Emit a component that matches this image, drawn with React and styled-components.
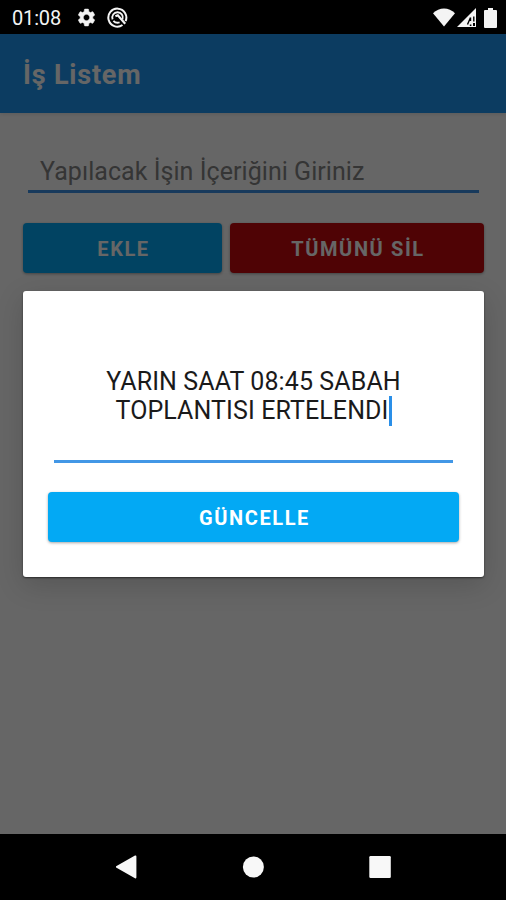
import React from "react";
import styled, { createGlobalStyle } from "styled-components";

const GlobalStyle = createGlobalStyle`
  *, *::before, *::after { box-sizing: border-box; }
  body { margin: 0; background: #000; font-family: Roboto, sans-serif; }
`;

const Phone = styled.div`
  display: flex;
  flex-direction: column;
  width: 506px;
  height: 900px;
  overflow: hidden;
  background: #000;
`;

const StatusBar = styled.header`
  display: flex;
  align-items: center;
  flex: 0 0 34px;
  padding: 1px 9px 0 12px;
  color: #f4f4f4;
  svg { display: block; }
`;

const Clock = styled.time`
  width: 64px;
  font-size: 20px;
  line-height: 24px;
  letter-spacing: -0.15px;
`;

const StatusGroup = styled.div`
  display: flex;
  align-items: center;
  gap: ${(p) => p.$gap}px;
  margin-left: ${(p) => (p.$end ? "auto" : "0")};
`;

const Screen = styled.main`
  position: relative;
  display: flex;
  flex-direction: column;
  flex: 1;
  background: #fff;
`;

const AppBar = styled.div`
  display: flex;
  align-items: center;
  flex: 0 0 79px;
  padding: 2px 23px 0;
  background: #1e97f3;
  box-shadow: 0 1px 4px rgba(0, 0, 0, 0.12);
`;

const Title = styled.h1`
  margin: 0;
  color: #fff;
  font-size: 27px;
  line-height: 32px;
  font-weight: 700;
  letter-spacing: 0.8px;
`;

const Content = styled.section`
  display: flex;
  flex-direction: column;
  padding: 40px 22px 0 23px;
`;

const TaskInput = styled.div`
  height: 40px;
  margin: 0 5px;
  padding: 3px 12px 0;
  border-bottom: 3px solid #3e92e6;
  color: #858585;
  font-size: 25px;
  line-height: 32px;
  letter-spacing: 0.05px;
  white-space: nowrap;
`;

const ButtonRow = styled.div`
  display: grid;
  grid-template-columns: 199px 254px;
  gap: 8px;
  margin-top: 30px;
`;

const Button = styled.button`
  height: 50px;
  padding: 2px 0 0 2px;
  border: 0;
  border-radius: 4px;
  background: ${(p) => (p.$danger ? "#c6080d" : "#03a9f4")};
  box-shadow: 0 1px 3px rgba(0, 0, 0, 0.35);
  color: #fff;
  font: 700 20px/24px Roboto, sans-serif;
  letter-spacing: 1.6px;
  text-align: center;
`;

const Scrim = styled.div`
  position: absolute;
  inset: 0;
  padding: 256.5px 22px 0 23px;
  background: rgba(0, 0, 0, 0.6);
`;

const Dialog = styled.div`
  display: flex;
  flex-direction: column;
  height: 286.5px;
  padding: 76px 25px 0;
  border-radius: 3px;
  background: #fff;
  box-shadow: 0 1px 2px rgba(0, 0, 0, 0.55), 0 8px 28px rgba(0, 0, 0, 0.16);
`;

const EditField = styled.div`
  height: 96.5px;
  margin: 0 6px 29px;
  border-bottom: 3px solid #4297e6;
  color: #1a1a1a;
  font-size: 25px;
  line-height: 29.5px;
  letter-spacing: 0.1px;
  text-align: center;
`;

const Line = styled.div`
  display: flex;
  justify-content: center;
  white-space: nowrap;
`;

const Caret = styled.span`
  width: 3px;
  height: 30px;
  background: #2a8fe8;
`;

const NavBar = styled.nav`
  display: grid;
  grid-template-columns: repeat(3, 126.5px);
  justify-content: center;
  justify-items: center;
  align-items: center;
  flex: 0 0 66.5px;
  color: #f8f8f8;
`;

const Gear = () => (
  <svg width="21" height="21" viewBox="0 0 24 24" fill="currentColor" stroke="currentColor" strokeWidth=".6">
    <path d="M19.14 12.94c.04-.3.06-.61.06-.94 0-.32-.02-.64-.07-.94l2.03-1.58c.18-.14.23-.41.12-.61l-1.92-3.32c-.12-.22-.37-.29-.59-.22l-2.39.96c-.5-.38-1.03-.7-1.62-.94L14.4 2.81c-.04-.24-.24-.41-.48-.41h-3.84c-.24 0-.43.17-.47.41l-.36 2.54c-.59.24-1.13.57-1.62.94l-2.39-.96c-.22-.08-.47 0-.59.22L2.74 8.87c-.12.21-.08.47.12.61l2.03 1.58c-.05.3-.09.63-.09.94s.02.64.07.94l-2.03 1.58c-.18.14-.23.41-.12.61l1.92 3.32c.12.22.37.29.59.22l2.39-.96c.5.38 1.03.7 1.62.94l.36 2.54c.05.24.24.41.48.41h3.84c.24 0 .44-.17.47-.41l.36-2.54c.59-.24 1.13-.56 1.62-.94l2.39.96c.22.08.47 0 .59-.22l1.92-3.32c.12-.22.07-.47-.12-.61l-2.01-1.58zM12 15.6c-1.98 0-3.6-1.62-3.6-3.6s1.62-3.6 3.6-3.6 3.6 1.62 3.6 3.6-1.62 3.6-3.6 3.6z" />
  </svg>
);

const DebugBadge = () => (
  <svg width="21" height="21" viewBox="0 0 21 21" fill="none" stroke="currentColor">
    <path d="M15.5 18A9 9 0 1 1 18.6 14.2" strokeWidth="2" />
    <path d="M5.6 12.4A5.3 5.3 0 1 1 15.6 12.2" strokeWidth="1.8" />
    <path d="M8.4 9.2 10.8 8.2 18.2 16.8" strokeWidth="2.2" />
    <path d="M6.4 13.8Q8.8 16.6 12.6 15.4" strokeWidth="1.8" />
  </svg>
);

const Wifi = () => (
  <svg width="22" height="19" viewBox="0 0 22 19" fill="currentColor">
    <path d="M0 5.2C6-1.1 16-1.1 22 5.2L11 18.5Z" />
  </svg>
);

const Signal = () => (
  <svg width="19" height="19" viewBox="0 0 19 19">
    <path d="M0 19 19 0V19Z" fill="currentColor" />
    <path d="M10.5 16.5 13.5 9.5M13.5 9.5V13M16.8 8.5V13.5M12.8 17.2h1.6" fill="none" stroke="#000" strokeWidth="1.4" />
    <path d="M16 15h2v3h-2z" fill="#000" />
  </svg>
);

const Battery = () => (
  <svg width="13" height="20" viewBox="0 0 13 20" fill="currentColor">
    <path d="M4 0h5v2h3q1 0 1 1v16q0 1-1 1H1q-1 0-1-1V3q0-1 1-1h3Z" />
  </svg>
);

const Back = () => (
  <svg width="22" height="24" viewBox="0 0 22 24" fill="currentColor">
    <path d="M.7 11.2 19.6.5Q21 0 21 1.5V22.3Q21 24 19.6 23.2L.7 12.6Q-.2 12 .7 11.2Z" transform="translate(-.6 0)" />
  </svg>
);

const Home = () => (
  <svg width="22" height="22" viewBox="0 0 22 22" fill="currentColor">
    <circle cx="11.4" cy="11" r="10.5" />
  </svg>
);

const Recents = () => (
  <svg width="22" height="22" viewBox="0 0 22 22" fill="currentColor">
    <rect x=".3" y="0" width="21.5" height="22" rx="1.2" />
  </svg>
);

export default function App() {
  return (
    <>
      <GlobalStyle />
      <Phone>
        <StatusBar>
          <Clock>01:08</Clock>
          <StatusGroup $gap={10}>
            <Gear />
            <DebugBadge />
          </StatusGroup>
          <StatusGroup $gap={2} $end>
            <Wifi />
            <StatusGroup $gap={8}>
              <Signal />
              <Battery />
            </StatusGroup>
          </StatusGroup>
        </StatusBar>
        <Screen>
          <AppBar>
            <Title>İş Listem</Title>
          </AppBar>
          <Content>
            <TaskInput>Yapılacak İşin İçeriğini Giriniz</TaskInput>
            <ButtonRow>
              <Button>EKLE</Button>
              <Button $danger>TÜMÜNÜ SİL</Button>
            </ButtonRow>
          </Content>
          <Scrim>
            <Dialog role="dialog">
              <EditField>
                <Line>YARIN SAAT 08:45 SABAH</Line>
                <Line>
                  TOPLANTISI ERTELENDI
                  <Caret />
                </Line>
              </EditField>
              <Button>GÜNCELLE</Button>
            </Dialog>
          </Scrim>
        </Screen>
        <NavBar>
          <Back />
          <Home />
          <Recents />
        </NavBar>
      </Phone>
    </>
  );
}
